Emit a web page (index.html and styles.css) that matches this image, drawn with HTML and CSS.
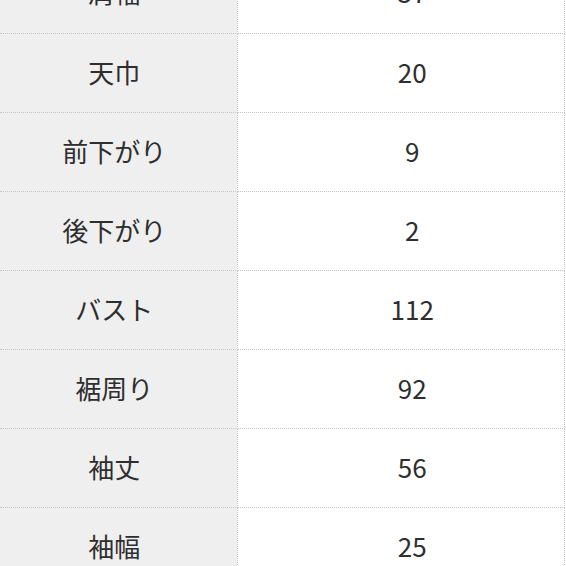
FILE: index.html
```html
<!DOCTYPE html>
<html lang="ja">
<head>
<meta charset="utf-8">
<link rel="stylesheet" href="styles.css">
</head>
<body>
<div class="viewport">
  <table class="size-table">
    <tbody>
      <tr><th>肩幅</th><td>57</td></tr>
      <tr><th>天巾</th><td>20</td></tr>
      <tr><th>前下がり</th><td>9</td></tr>
      <tr><th>後下がり</th><td>2</td></tr>
      <tr><th>バスト</th><td>112</td></tr>
      <tr><th>裾周り</th><td>92</td></tr>
      <tr><th>袖丈</th><td>56</td></tr>
      <tr><th>袖幅</th><td>25</td></tr>
    </tbody>
  </table>
</div>
</body>
</html>
```
FILE: styles.css
```css
html, body {
  margin: 0;
  padding: 0;
  background: #ffffff;
}
.viewport {
  width: 566px;
  height: 566px;
  overflow: hidden;
}
.size-table {
  margin-top: -46px;
  width: 565px;
  border-collapse: collapse;
  table-layout: fixed;
  font-family: "Noto Sans CJK JP", "Noto Sans", sans-serif;
  font-size: 26px;
  color: #2e2e2e;
}
.size-table th,
.size-table td {
  height: 79px;
  padding: 0 0 3px 0;
  text-align: center;
  vertical-align: middle;
  font-weight: normal;
  border-bottom: 1px dotted #c4c4c4;
  box-sizing: border-box;
}
.size-table th {
  width: 237px;
  background: #efefef;
  padding-right: 8px;
  border-right: 1px dotted #c4c4c4;
}
.size-table td {
  background: #ffffff;
  padding-left: 23px;
  border-right: 1px dotted #c4c4c4;
}
```
